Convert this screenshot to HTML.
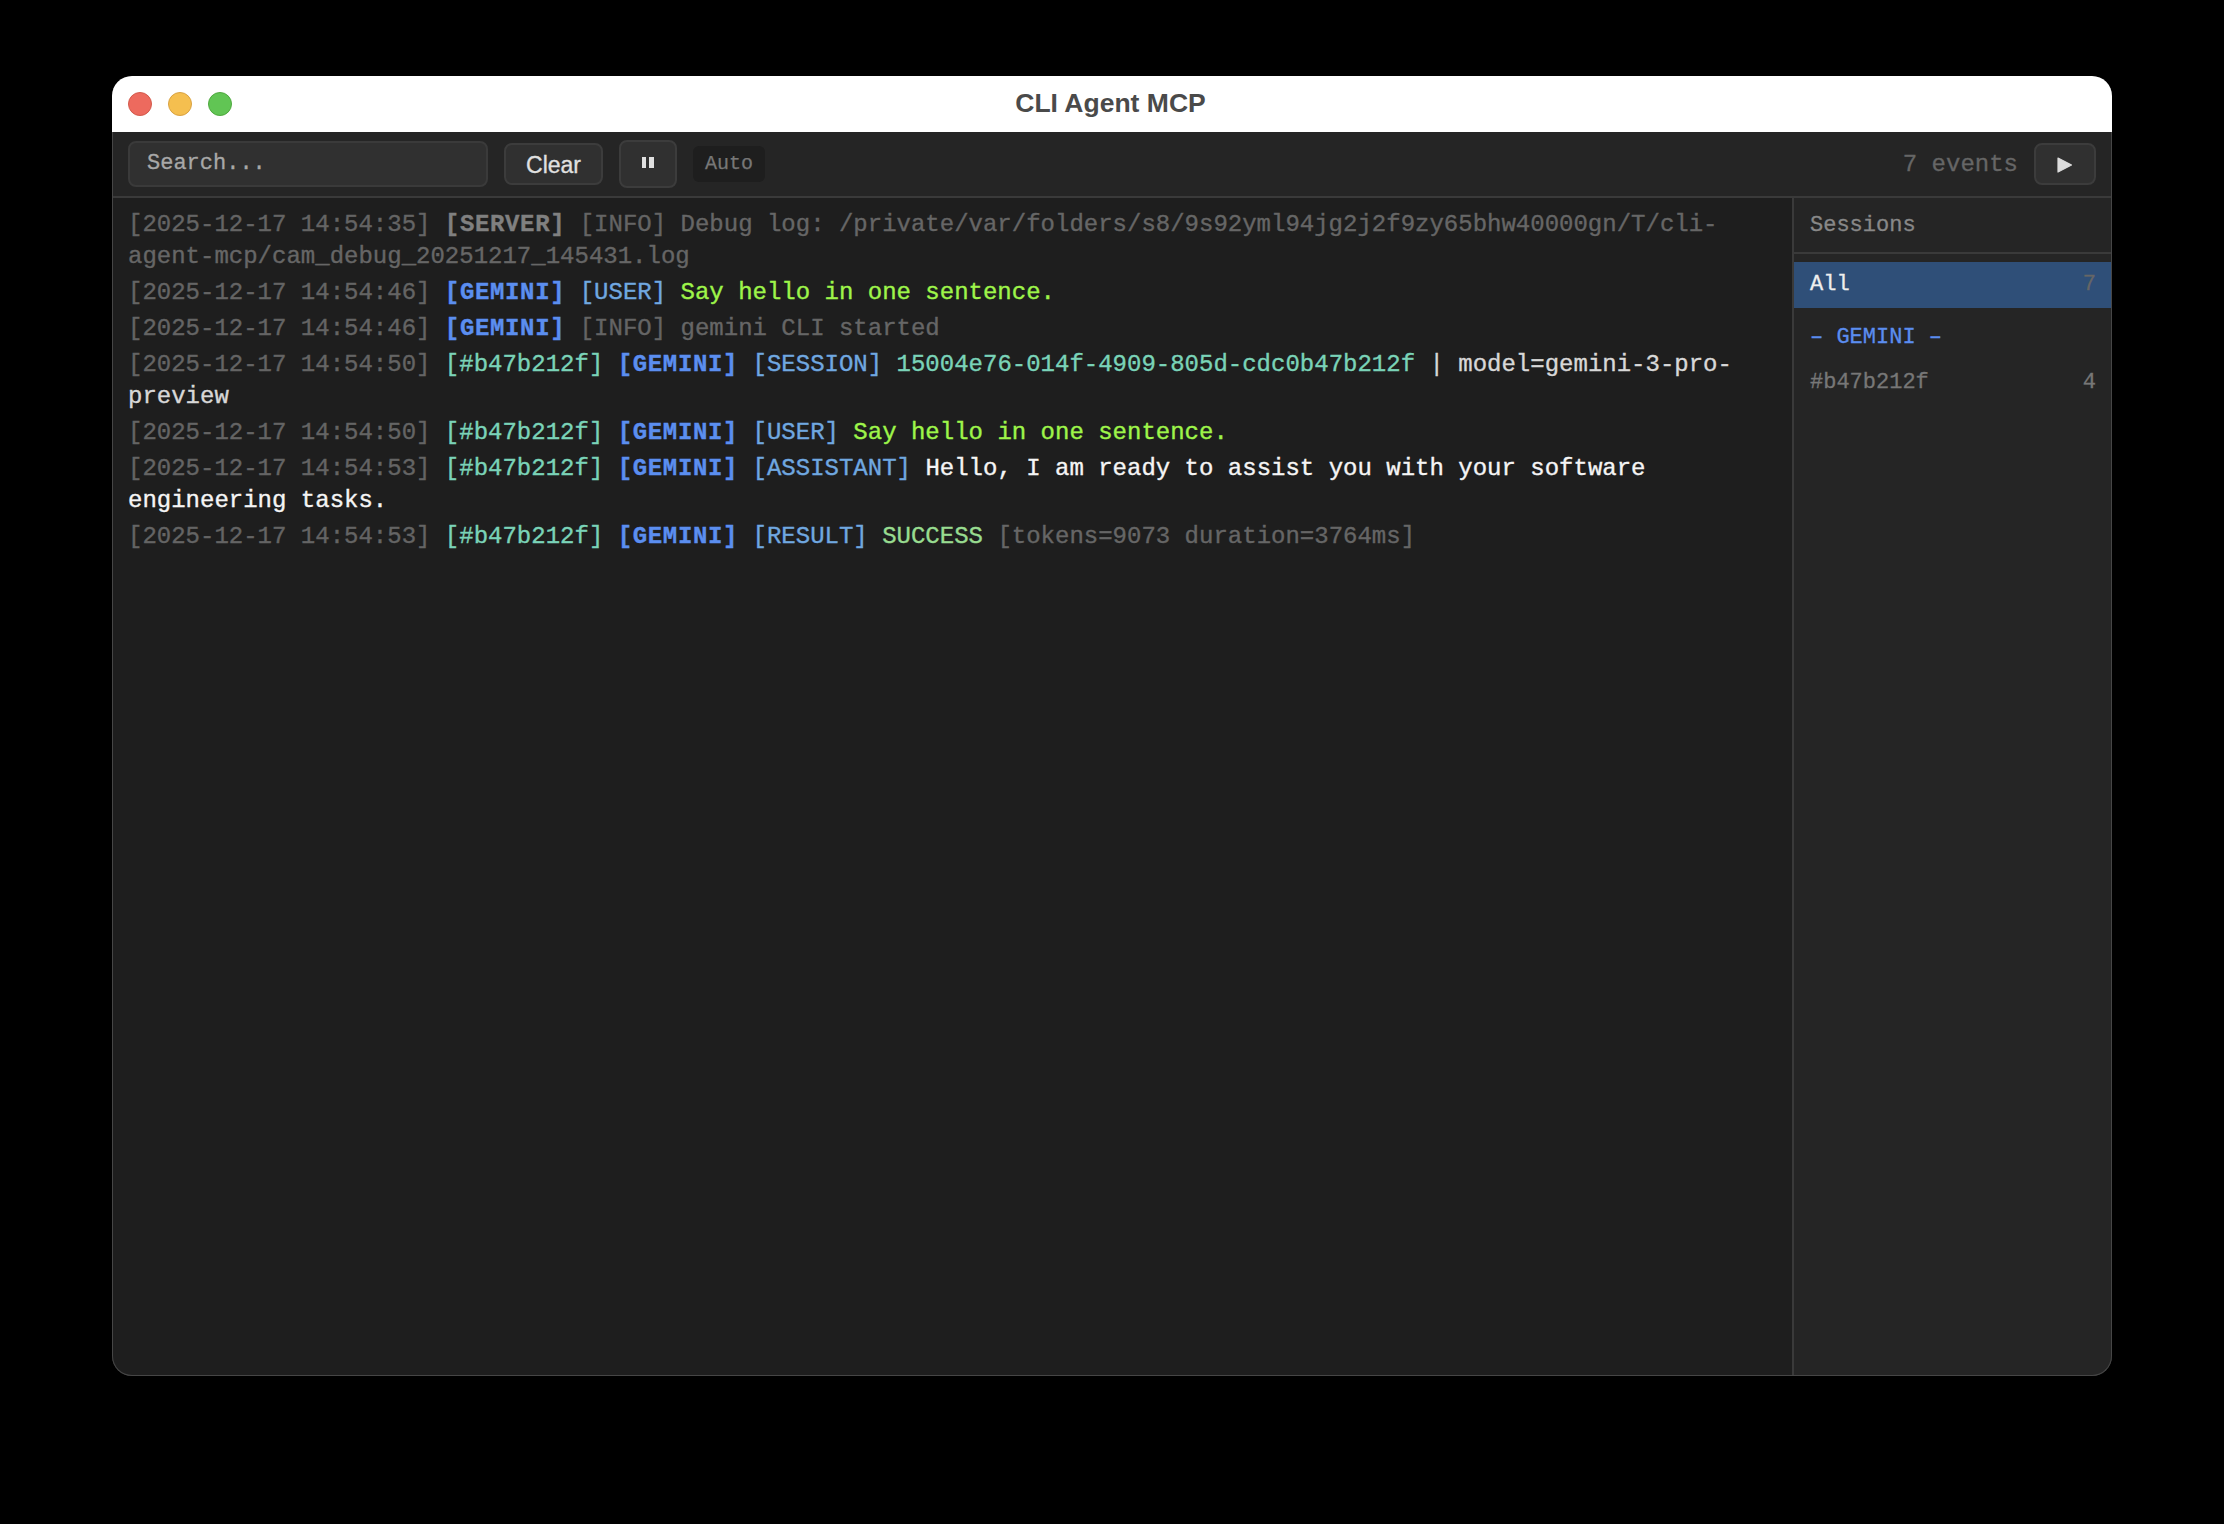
<!DOCTYPE html>
<html><head><meta charset="utf-8">
<style>
*{box-sizing:border-box;margin:0;padding:0}
html,body{width:2224px;height:1524px;background:#000;overflow:hidden}
body{position:relative;font-family:"Liberation Mono",monospace}
.win{position:absolute;left:112px;top:76px;width:2000px;height:1300px;border-radius:20px;overflow:hidden;background:#1e1e1e}
.winborder{position:absolute;left:112px;top:132px;width:2000px;height:1244px;border-radius:0 0 20px 20px;border:1px solid #464646;border-top:none;pointer-events:none}
.title{position:absolute;left:0;top:0;width:2000px;height:56px;background:#fff}
.title .t{position:absolute;left:-1.5px;width:2000px;top:-1.5px;height:56px;line-height:56px;text-align:center;font-family:"Liberation Sans",sans-serif;font-weight:bold;font-size:26.5px;color:#4a4a4a}
.dot{position:absolute;top:16px;width:24px;height:24px;border-radius:50%}
.d1{left:16px;background:#ed6a5e;border:1px solid #d25a4c}
.d2{left:56px;background:#f5bf4f;border:1px solid #d8a243}
.d3{left:96px;background:#61c554;border:1px solid #4fa83f}
.tb{position:absolute;left:0;top:56px;width:2000px;height:66px;background:#252525;border-bottom:2px solid #3a3a3a}
.search{position:absolute;left:16px;top:9px;width:360px;height:46px;background:#303030;border:2px solid #3a3a3a;border-radius:8px;color:#a8a8a8;font-size:22px;line-height:42px;padding-left:17px;-webkit-text-stroke:0.3px currentColor}
.btn{position:absolute;background:#303030;border:2px solid #3c3c3c;border-radius:8px}
.clear{left:392px;top:11px;width:99px;height:42px;font-family:"Liberation Sans",sans-serif;font-size:23px;color:#e0e0e0;text-align:center;line-height:40px;-webkit-text-stroke:0.3px currentColor}
.pause{left:507px;top:8px;width:58px;height:48px}
.pause i{position:absolute;top:14.7px;width:4.5px;height:11.3px;background:#e0e0e0}
.auto{position:absolute;left:581px;top:14px;width:72px;height:36px;background:#1e1e1e;border-radius:6px;color:#777;font-size:20px;line-height:36px;text-align:center;-webkit-text-stroke:0.25px currentColor}
.events{position:absolute;left:1786px;top:1px;height:64px;line-height:64px;color:#666;font-size:24px;width:120px;text-align:right;-webkit-text-stroke:0.3px currentColor}
.play{left:1922px;top:11px;width:62px;height:42px}
.main{position:absolute;left:0;top:122px;width:1680px;height:1178px;background:#1e1e1e;padding:9px 16px}
.side{position:absolute;left:1680px;top:122px;width:320px;height:1178px;background:#252525;border-left:2px solid #3a3a3a;-webkit-text-stroke:0.3px currentColor}
.log{font-size:24px;line-height:32px;color:#666;-webkit-text-stroke:0.35px currentColor}
.e{padding:2px 0;white-space:pre-wrap;overflow-wrap:break-word}
.ts{color:#646464}
.srv{color:#808080;font-weight:bold;letter-spacing:0.65px}
.inf{color:#646464}
.gm{color:#5b8ef0;font-weight:bold;letter-spacing:0.65px}
.ty{color:#70a8e0}
.us{color:#9ef54a}
.sid{color:#7ad3b8}
.wh{color:#d8d8d8}
.as{color:#f5f5f5}
.ok{color:#98dc90}
.dim{color:#666}
.sh{height:56px;border-bottom:2px solid #3a3a3a;color:#888;font-size:22px;line-height:55px;padding-left:16px}
.item{position:absolute;left:0;width:318px;font-size:22px;padding-left:16px}
.all{top:64px;height:46px;background:#2f4f78;color:#eee;line-height:46px}
.cnt{position:absolute;right:16px;top:0}
</style></head><body>
<div class="win">
  <div class="title"><div class="dot d1"></div><div class="dot d2"></div><div class="dot d3"></div><div class="t">CLI Agent MCP</div></div>
  <div class="tb">
    <div class="search">Search...</div>
    <div class="btn clear">Clear</div>
    <div class="btn pause"><i style="left:20.6px"></i><i style="left:28.3px"></i></div>
    <div class="auto">Auto</div>
    <div class="events">7 events</div>
    <div class="btn play"><svg width="62" height="42" style="position:absolute;left:-2px;top:-2px"><path d="M24 15 L37.5 22 L24 29 Z" fill="#dcdcdc" stroke="#dcdcdc" stroke-width="1.2" stroke-linejoin="round"/></svg></div>
  </div>
  <div class="main"><div class="log">
<div class="e"><span class="ts">[2025-12-17 14:54:35]</span> <span class="srv">[SERVER]</span> <span class="inf">[INFO]</span> <span class="dim">Debug log: /private/var/folders/s8/9s92yml94jg2j2f9zy65bhw40000gn/T/cli-agent-mcp/cam_debug_20251217_145431.log</span></div>
<div class="e"><span class="ts">[2025-12-17 14:54:46]</span> <span class="gm">[GEMINI]</span> <span class="ty">[USER]</span> <span class="us">Say hello in one sentence.</span></div>
<div class="e"><span class="ts">[2025-12-17 14:54:46]</span> <span class="gm">[GEMINI]</span> <span class="inf">[INFO]</span> <span class="dim">gemini CLI started</span></div>
<div class="e"><span class="ts">[2025-12-17 14:54:50]</span> <span class="sid">[#b47b212f]</span> <span class="gm">[GEMINI]</span> <span class="ty">[SESSION]</span> <span class="sid">15004e76-014f-4909-805d-cdc0b47b212f</span> <span class="wh">| model=gemini-3-pro-preview</span></div>
<div class="e"><span class="ts">[2025-12-17 14:54:50]</span> <span class="sid">[#b47b212f]</span> <span class="gm">[GEMINI]</span> <span class="ty">[USER]</span> <span class="us">Say hello in one sentence.</span></div>
<div class="e"><span class="ts">[2025-12-17 14:54:53]</span> <span class="sid">[#b47b212f]</span> <span class="gm">[GEMINI]</span> <span class="ty">[ASSISTANT]</span> <span class="as">Hello, I am ready to assist you with your software engineering tasks.</span></div>
<div class="e"><span class="ts">[2025-12-17 14:54:53]</span> <span class="sid">[#b47b212f]</span> <span class="gm">[GEMINI]</span> <span class="ty">[RESULT]</span> <span class="ok">SUCCESS</span> <span class="dim">[tokens=9073 duration=3764ms]</span></div>
</div></div>
  <div class="side">
    <div class="sh">Sessions</div>
    <div class="item all">All<span class="cnt" style="color:#666">7</span></div>
    <div class="item" style="top:117px;height:46px;line-height:46px;color:#5b8def">– GEMINI –</div>
    <div class="item" style="top:162px;height:46px;line-height:46px;color:#777">#b47b212f<span class="cnt">4</span></div>
  </div>
</div>
<div class="winborder"></div>
</body></html>
